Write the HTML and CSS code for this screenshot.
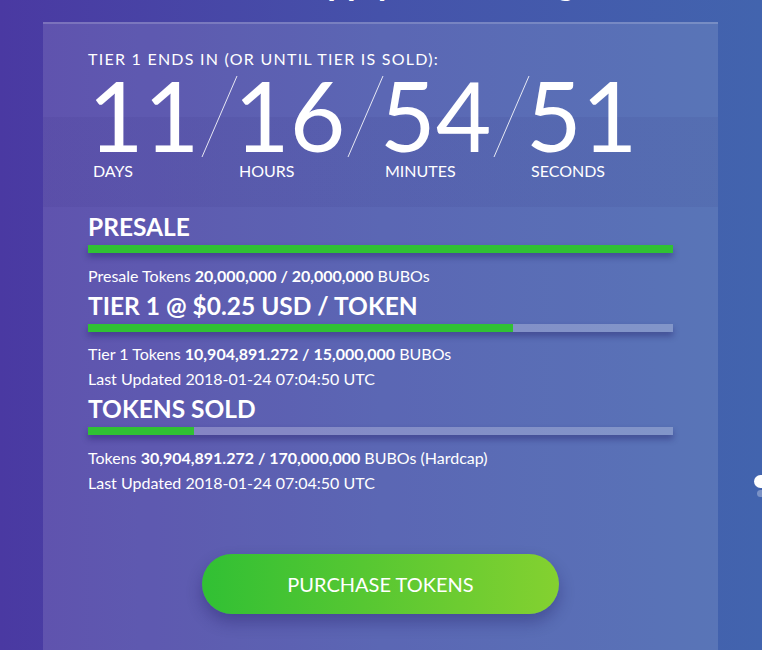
FILE: index.html
```html
<!DOCTYPE html>
<html lang="en">
<head>
<meta charset="utf-8">
<title>Token Sale</title>
<link rel="stylesheet" href="styles.css">
</head>
<body>
<div class="page">
  <h2 class="section-title">Token Supply and Pricing</h2>
  <div class="panel">
    <div class="countdown">
      <div class="countdown-title">TIER 1 ENDS IN (OR UNTIL TIER IS SOLD):</div>
      <div class="timer">
        <div class="unit"><div class="num">11</div><div class="label">DAYS</div></div>
        <div class="sep"><svg width="34" height="94" viewBox="0 0 34 94"><line x1="37" y1="8" x2="2" y2="89"/></svg></div>
        <div class="unit"><div class="num">16</div><div class="label">HOURS</div></div>
        <div class="sep"><svg width="34" height="94" viewBox="0 0 34 94"><line x1="37" y1="8" x2="2" y2="89"/></svg></div>
        <div class="unit"><div class="num">54</div><div class="label">MINUTES</div></div>
        <div class="sep"><svg width="34" height="94" viewBox="0 0 34 94"><line x1="37" y1="8" x2="2" y2="89"/></svg></div>
        <div class="unit"><div class="num">51</div><div class="label">SECONDS</div></div>
      </div>
    </div>
    <div class="stats">
      <div class="stat">
        <h3 class="stat-title">PRESALE</h3>
        <div class="bar"><div class="fill" style="width:100%"></div></div>
        <p class="stat-line">Presale Tokens <b>20,000,000 / 20,000,000</b> BUBOs</p>
      </div>
      <div class="stat">
        <h3 class="stat-title">TIER 1 @ $0.25 USD / TOKEN</h3>
        <div class="bar"><div class="fill" style="width:72.7%"></div></div>
        <p class="stat-line">Tier 1 Tokens <b>10,904,891.272 / 15,000,000</b> BUBOs</p>
        <p class="stat-line">Last Updated 2018-01-24 07:04:50 UTC</p>
      </div>
      <div class="stat">
        <h3 class="stat-title">TOKENS SOLD</h3>
        <div class="bar"><div class="fill" style="width:18.2%"></div></div>
        <p class="stat-line">Tokens <b>30,904,891.272 / 170,000,000</b> BUBOs (Hardcap)</p>
        <p class="stat-line">Last Updated 2018-01-24 07:04:50 UTC</p>
      </div>
    </div>
    <div class="cta"><button class="buy" type="button">PURCHASE TOKENS</button></div>
  </div>
  <span class="edge-bubble"></span>
</div>
</body>
</html>
```

FILE: styles.css
```css
* { box-sizing: border-box; }

html, body {
  margin: 0;
  padding: 0;
}

body {
  font-family: "Lato", "Open Sans", "Liberation Sans", sans-serif;
  color: #ffffff;
  background: linear-gradient(90deg, #4a39a2 0%, #4552aa 50%, #4264ae 100%);
}

.page {
  position: relative;
  width: 762px;
  height: 650px;
  overflow: hidden;
}

.section-title {
  margin: -39.5px 0 21.5px;
  font-size: 35px;
  line-height: 40px;
  font-weight: 700;
  text-align: center;
  color: #ffffff;
}

.panel {
  width: 675px;
  margin-left: 43px;
  min-height: 700px;
  border-top: 2px solid rgba(255, 255, 255, 0.18);
  background: rgba(255, 255, 255, 0.12);
}

.countdown {
  padding: 26px 45px 27px;
  background: linear-gradient(180deg, rgba(255, 255, 255, 0) 0, rgba(255, 255, 255, 0) 93px, rgba(20, 10, 90, 0.06) 93px, rgba(20, 10, 90, 0.06) 100%);
}

.countdown-title {
  font-size: 16px;
  line-height: 18px;
  letter-spacing: 1.25px;
}

.timer {
  display: flex;
}

.unit {
  width: 112px;
  flex: none;
}

.num {
  font-size: 96px;
  line-height: 94px;
  font-weight: 400;
  white-space: nowrap;
}

.label {
  padding-left: 5px;
  font-size: 16px;
  line-height: 18px;
}

.sep {
  width: 34px;
  flex: none;
}

.sep svg {
  display: block;
  overflow: visible;
}

.sep line {
  stroke: rgba(255, 255, 255, 0.85);
  stroke-width: 1;
}

.stats {
  padding: 6px 45px 0;
}

.stat-title {
  margin: 4px 0 0;
  font-size: 24.5px;
  line-height: 28px;
  font-weight: 700;
}

.stat:first-child .stat-title {
  margin-top: 0;
}

.bar {
  margin-top: 4px;
  height: 8px;
  background: rgba(255, 255, 255, 0.25);
  box-shadow: 0 4px 6px rgba(20, 10, 80, 0.35);
}

.fill {
  height: 100%;
  background: #30c134;
}

.stat-line {
  margin: 0;
  font-size: 16px;
  line-height: 25px;
}

.bar + .stat-line {
  margin-top: 9.5px;
}

.stat-line b {
  font-weight: 700;
}

.cta {
  display: flex;
  justify-content: center;
  padding-top: 59.5px;
}

.buy {
  width: 357px;
  height: 60px;
  border: none;
  border-radius: 30px;
  background: linear-gradient(90deg, #31c034 0%, #56c732 45%, #84d130 100%);
  box-shadow: 0 8px 16px rgba(20, 10, 80, 0.3);
  color: #ffffff;
  font-family: "Lato", "Open Sans", "Liberation Sans", sans-serif;
  font-size: 20px;
  font-weight: 400;
  cursor: pointer;
}

.edge-bubble {
  position: absolute;
  left: 754px;
  top: 475px;
  width: 20px;
  height: 13px;
  border-radius: 7px;
  background: #ffffff;
  box-shadow: 0 12px 0 -3px rgba(255, 255, 255, 0.3);
}
```
